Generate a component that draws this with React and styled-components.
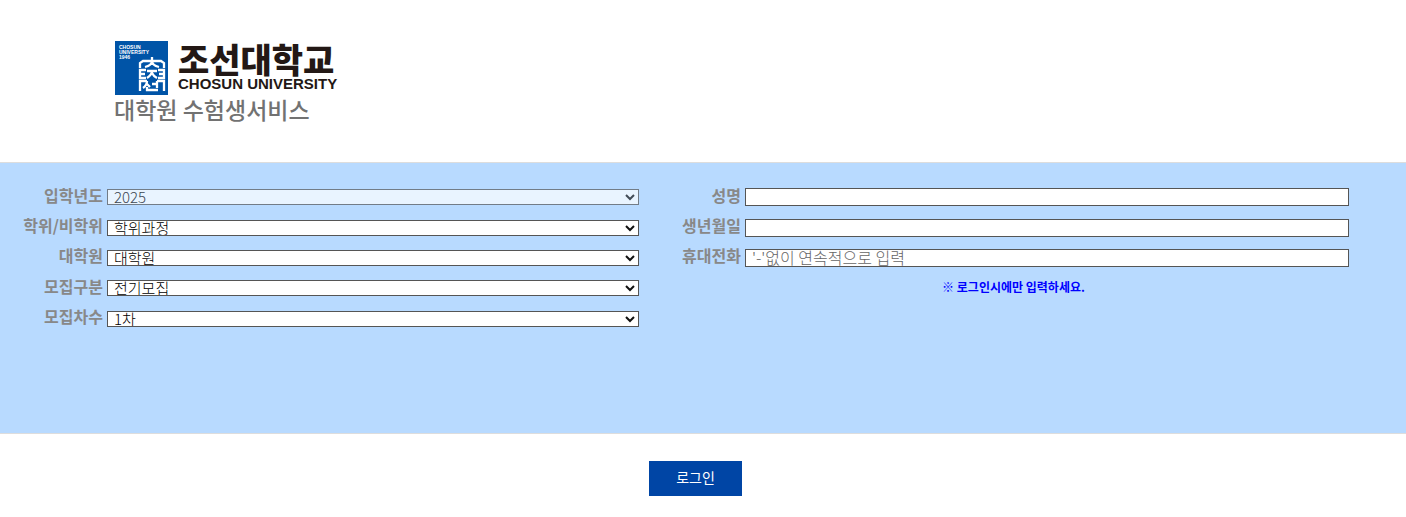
import React from "react";
import styled, { createGlobalStyle } from "styled-components";

const GlobalStyle = createGlobalStyle`
  * {
    box-sizing: border-box;
  }

  body {
    margin: 0;
    background-color: #fff;
    font-family: "Noto Sans CJK KR", sans-serif;
  }
`;

const Header = styled.header`
  padding: 40px 114px 39px;
`;

const Brand = styled.div`
  display: flex;
  align-items: flex-start;
  gap: 9px;
`;

const Emblem = styled.svg`
  width: 55px;
  height: 55px;
  flex: none;
`;

const BrandName = styled.div`
  color: #231815;
  font-size: 34px;
  font-weight: 900;
  line-height: 37px;
  white-space: nowrap;
`;

const BrandEnglish = styled.div`
  color: #231815;
  font-family: "Liberation Sans", Arial, sans-serif;
  font-size: 15px;
  font-weight: 700;
  line-height: 14px;
  white-space: nowrap;
`;

const ServiceName = styled.h1`
  margin: 0;
  color: #727272;
  font-size: 23px;
  font-weight: 500;
  line-height: 28px;
`;

const Panel = styled.section`
  display: flex;
  gap: 4px;
  min-height: 272px;
  padding: 19px 57px 0 0;
  border-top: 1px solid #ddd;
  border-bottom: 1px solid #ddd;
  background-color: #b8daff;
`;

const Column = styled.div`
  flex: ${({ $grow }) => $grow} 1 0;
  display: grid;
  grid-template-rows: repeat(5, 1fr);
  height: 152px;
`;

const Field = styled.div`
  display: grid;
  grid-template-columns: ${({ $label }) => $label} 1fr;
  gap: 4px;
  align-items: center;
`;

const Label = styled.label`
  padding-bottom: 5px;
  color: #888;
  font-size: 16px;
  font-weight: 700;
  line-height: 20px;
  text-align: right;
  white-space: nowrap;
`;

const SelectBox = styled.div`
  position: relative;
  display: flex;
  opacity: ${({ $disabled }) => ($disabled ? 0.7 : 1)};
`;

const Select = styled.select`
  appearance: none;
  width: 100%;
  height: 16px;
  padding: 0 20px 0 6px;
  border: 1px solid #555;
  border-radius: 0;
  background-color: #fff;
  color: #000;
  font-family: inherit;
  font-size: 15px;
  font-weight: 300;
  line-height: 14px;

  &:disabled {
    color: #000;
    opacity: 1;
  }
`;

const Arrow = styled.svg`
  position: absolute;
  top: 5px;
  right: 4px;
  width: 10px;
  height: 7px;
  pointer-events: none;
`;

const Input = styled.input`
  width: 100%;
  height: 18px;
  padding: 0 6px 2px;
  border: 1px solid #555;
  background-color: #fff;
  font-family: inherit;
  font-size: 16px;
  font-weight: 300;
  line-height: 14px;

  &::placeholder {
    color: #666;
  }
`;

const Notice = styled.p`
  margin: 0;
  padding: 0 0 2px 35px;
  align-self: center;
  color: #00f;
  font-size: 12px;
  font-weight: 700;
  line-height: 16px;
  text-align: center;
`;

const Actions = styled.div`
  display: flex;
  justify-content: center;
  padding: 27px 15px 20px 0;
`;

const LoginButton = styled.button`
  height: 35px;
  padding: 0 27px 4px;
  border: 0;
  background-color: #0045a5;
  color: #fff;
  font-family: inherit;
  font-size: 14px;
  line-height: 20px;
`;

const selects = [
  { id: "year", label: "입학년도", value: "2025", disabled: true },
  { id: "degree", label: "학위/비학위", value: "학위과정" },
  { id: "school", label: "대학원", value: "대학원" },
  { id: "term", label: "모집구분", value: "전기모집" },
  { id: "round", label: "모집차수", value: "1차" },
];

const inputs = [
  { id: "name", label: "성명" },
  { id: "birth", label: "생년월일" },
  { id: "phone", label: "휴대전화", placeholder: "'-'없이 연속적으로 입력" },
];

const UniversityEmblem = () => (
  <Emblem viewBox="0 0 55 55" aria-hidden="true">
    <rect x="1" y="1" width="53" height="54" fill="#0054a7" />
    <g
      fill="#fff"
      fontFamily="Liberation Sans, Arial, sans-serif"
      fontSize="5"
      fontWeight="700"
    >
      <text x="5" y="9">CHOSUN</text>
      <text x="5" y="14">UNIVERSITY</text>
      <text x="5" y="19">1946</text>
    </g>
    <g fill="none" stroke="#fff" strokeWidth="2.3">
      <path d="M38 17v4M26 28v-5l3-2h18l3 2v5M38 21c0 3-3 5-7 6M38 21c0 3 3 5 7 6" />
      <path d="M32 30h-6v8h6M26 34h5M44 30h6v8h-6M50 34h-5M33 31h10M38 31c0 3-2 5-5 7M38 33c1 2 3 4 5 5" />
      <path d="M26 51V41h7M50 51V41h-7M33 41c0 3-1 5-4 7M33 44l3 3M43 41v7M38 44h5M33 47v3h11" />
    </g>
  </Emblem>
);

const App = () => {
  return (
    <>
      <GlobalStyle />
      <Header>
        <Brand>
          <UniversityEmblem />
          <div>
            <BrandName>조선대학교</BrandName>
            <BrandEnglish>CHOSUN UNIVERSITY</BrandEnglish>
          </div>
        </Brand>
        <ServiceName>대학원 수험생서비스</ServiceName>
      </Header>
      <form onSubmit={(e) => e.preventDefault()}>
        <Panel>
          <Column $grow={639}>
            {selects.map(({ id, label, value, disabled }) => (
              <Field key={id} $label="103px">
                <Label htmlFor={id}>{label}</Label>
                <SelectBox $disabled={disabled}>
                  <Select id={id} defaultValue={value} disabled={disabled}>
                    <option value={value}>{value}</option>
                  </Select>
                  <Arrow viewBox="0 0 10 7" aria-hidden="true">
                    <path
                      d="M1 1l4 4 4-4"
                      fill="none"
                      stroke="#111"
                      strokeWidth="2"
                    />
                  </Arrow>
                </SelectBox>
              </Field>
            ))}
          </Column>
          <Column $grow={706}>
            {inputs.map(({ id, label, placeholder }) => (
              <Field key={id} $label="98px">
                <Label htmlFor={id}>{label}</Label>
                <Input id={id} type="text" placeholder={placeholder} />
              </Field>
            ))}
            <Notice>※ 로그인시에만 입력하세요.</Notice>
          </Column>
        </Panel>
        <Actions>
          <LoginButton type="submit">로그인</LoginButton>
        </Actions>
      </form>
    </>
  );
};

export default App;
